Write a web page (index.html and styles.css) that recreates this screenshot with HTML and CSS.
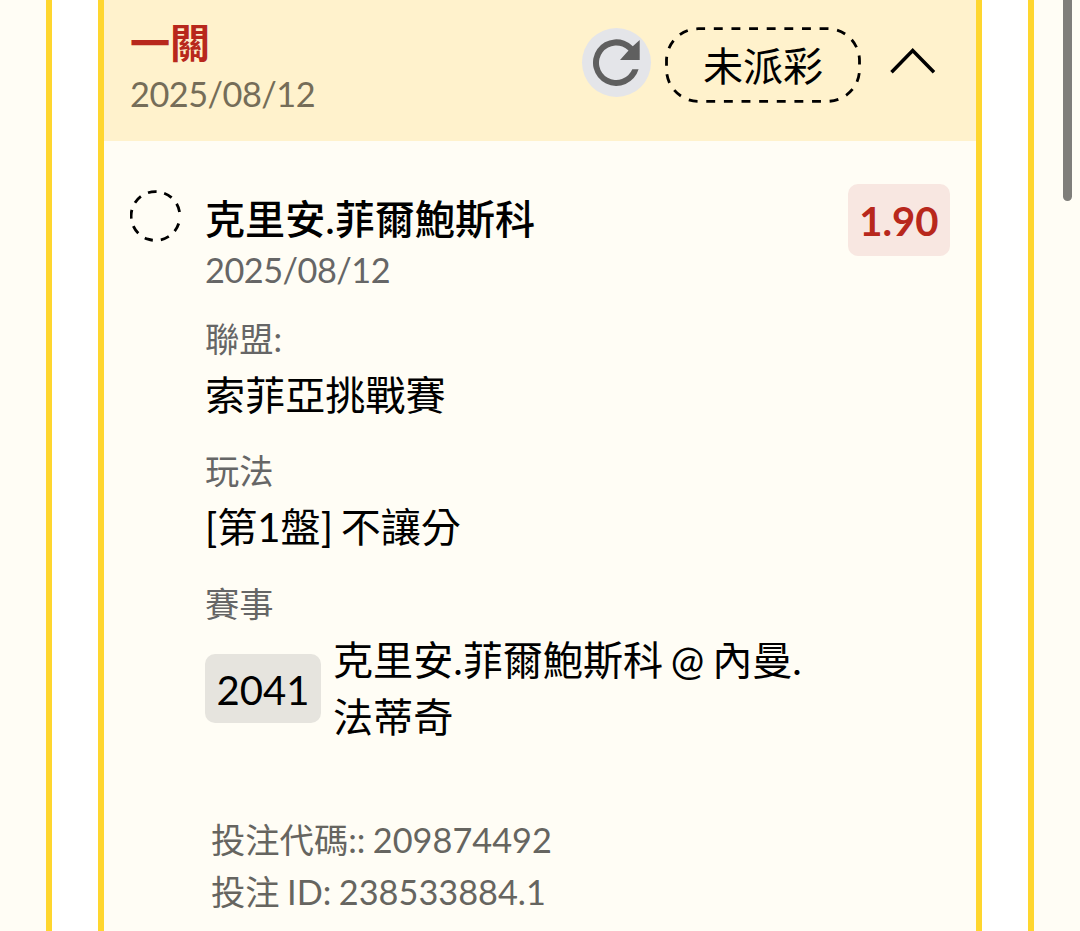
FILE: index.html
```
<!DOCTYPE html>
<html lang="zh-Hant">
<head>
<meta charset="utf-8">
<title>投注紀錄</title>
<link rel="stylesheet" href="styles.css">
</head>
<body>
<div class="page">
 <div class="panel">
  <div class="card">
   <div class="card-header">
    <div class="card-title">
     <div class="combo">一關</div>
     <div class="date">2025/08/12</div>
    </div>
    <div class="refresh">
     <svg width="69" height="69" viewBox="0 0 69 69">
      <path d="M56.6 41.3A23.3 23.3 0 1 1 50.8 18.2L57.7 12V32.1H38L46.5 22.5A17.3 17.3 0 1 0 50.3 41.3Z" fill="#5f5f5f"/>
     </svg>
    </div>
    <div class="status">
     <svg class="status-outline" width="196" height="76" viewBox="0 0 196 76">
      <rect x="1.5" y="1.7" width="193" height="72.6" rx="32" fill="none" stroke="#000" stroke-width="2.8" stroke-dasharray="8.9 8.73" stroke-dashoffset="2.3"/>
     </svg>
     <span>未派彩</span>
    </div>
    <svg class="chevron" width="46" height="26" viewBox="0 0 46 26">
     <path d="M1.5 24.2L22.7 2.5L44 24.2" fill="none" stroke="#000" stroke-width="3.5"/>
    </svg>
   </div>
   <div class="bet">
    <svg class="pending" width="52" height="52" viewBox="0 0 52 52">
     <circle cx="25.5" cy="26" r="24.4" fill="none" stroke="#000" stroke-width="2.8" stroke-dasharray="8.6 7.9 8.6 7.9 8.6 7.9 8.6 7.9 8.6 7.9 8.6 7.9 8.6 7.9 8.6 7.9 8.6 20" transform="rotate(18 25.5 26)"/>
    </svg>
    <div class="bet-body">
     <div class="bet-top">
      <div>
       <div class="pick">克里安.菲爾鮑斯科</div>
       <div class="date">2025/08/12</div>
      </div>
      <div class="odds">1.90</div>
     </div>
     <div class="field">
      <div class="label">聯盟:</div>
      <div class="value">索菲亞挑戰賽</div>
     </div>
     <div class="field">
      <div class="label">玩法</div>
      <div class="value">[第1盤] 不讓分</div>
     </div>
     <div class="field">
      <div class="label">賽事</div>
      <div class="match">
       <span class="match-no">2041</span>
       <div class="value">克里安.菲爾鮑斯科 @ 內曼.<br>法蒂奇</div>
      </div>
     </div>
     <div class="codes">
      <div>投注代碼:: 209874492</div>
      <div>投注 ID: 238533884.1</div>
     </div>
    </div>
   </div>
  </div>
 </div>
 <div class="scrollbar"></div>
</div>
</body>
</html>
```
FILE: styles.css
```
* {
  box-sizing: border-box;
}
body {
  margin: 0;
  background: #fffdf5;
  color: #000;
  font-family: Lato, "Noto Sans CJK TC", sans-serif;
  font-size: 40.1px;
}
svg {
  display: block;
  flex: none;
}
.page {
  position: relative;
  height: 931px;
  padding: 0 46px;
  overflow: hidden;
}
/* Outer white column with yellow sides */
.panel {
  height: 100%;
  padding: 0 46px;
  background: #fff;
  border: solid #ffd62e;
  border-width: 0 6px;
}
.card {
  height: 100%;
  background: #fffdf5;
  border: solid #ffd62e;
  border-width: 0 6px;
}
/* Header of the bet slip */
.card-header {
  display: flex;
  align-items: flex-start;
  height: 141px;
  padding: 17px 40px 0 26px;
  background: #fff2cc;
}
.card-title {
  flex: 1;
}
.combo {
  color: #b8281c;
  font-weight: 700;
  line-height: 52px;
}
.date {
  color: #666;
  font-size: 34.3px;
  letter-spacing: -0.5px;
  line-height: 49px;
}
.card-header .date {
  color: #756d58;
}
.refresh {
  width: 69px;
  height: 69px;
  margin: 11px 14px 0 0;
  border-radius: 50%;
  background: #e4e5e9;
}
.status {
  position: relative;
  width: 196px;
  height: 76px;
  margin: 10px 29px 0 0;
  line-height: 77px;
  text-align: center;
}
.status-outline {
  position: absolute;
  top: 0;
  left: 0;
}
.chevron {
  margin-top: 31px;
}
/* Bet details */
.bet {
  display: flex;
  gap: 23px;
  padding: 43px 26px 0 26px;
}
.pending {
  margin-top: 6px;
}
.bet-body {
  flex: 1;
}
.bet-top {
  display: flex;
  justify-content: space-between;
  align-items: flex-start;
  height: 107px;
}
.pick {
  padding-top: 8px;
  font-weight: 500;
  line-height: 54px;
}
.bet-top .date {
  line-height: 47px;
}
.odds {
  width: 102px;
  height: 72px;
  border-radius: 10px;
  background: #f8e7e1;
  color: #b8281c;
  font-weight: 700;
  line-height: 74px;
  text-align: center;
}
.field {
  margin-top: 21px;
}
.label {
  color: #666;
  font-size: 34.3px;
  line-height: 54px;
}
.value {
  line-height: 57.4px;
  word-spacing: -2.5px;
}
.match {
  display: flex;
  align-items: center;
  gap: 12px;
}
.match-no {
  width: 116px;
  height: 69px;
  border-radius: 10px;
  background: #e6e4de;
  line-height: 72px;
  text-align: center;
}
.codes {
  margin-top: 68px;
  padding-left: 6px;
  color: #666560;
  font-size: 34.3px;
  line-height: 52px;
  word-spacing: -1.3px;
}
.scrollbar {
  position: absolute;
  top: 0;
  right: 8px;
  width: 9px;
  height: 201px;
  border-radius: 0 0 5px 5px;
  background: #7f7e7a;
}
```
